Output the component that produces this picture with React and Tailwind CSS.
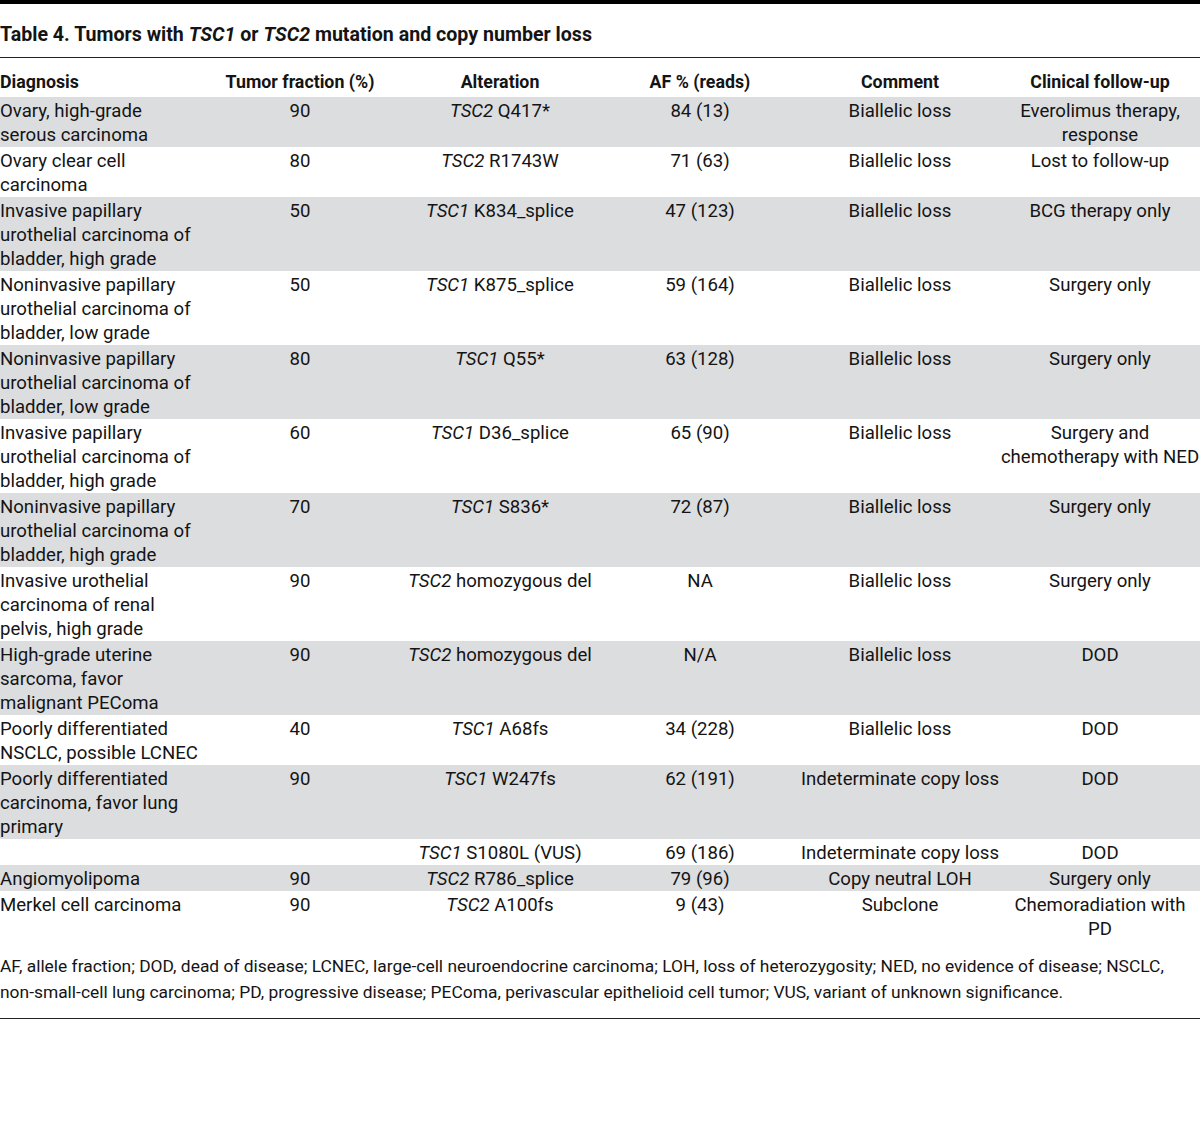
const rows = [
  { d: ["Ovary, high-grade", "serous carcinoma"], t: "90", g: "TSC2", a: " Q417*", af: "84 (13)", c: "Biallelic loss", f: ["Everolimus therapy,", "response"] },
  { d: ["Ovary clear cell", "carcinoma"], t: "80", g: "TSC2", a: " R1743W", af: "71 (63)", c: "Biallelic loss", f: ["Lost to follow-up"] },
  { d: ["Invasive papillary", "urothelial carcinoma of", "bladder, high grade"], t: "50", g: "TSC1", a: " K834_splice", af: "47 (123)", c: "Biallelic loss", f: ["BCG therapy only"] },
  { d: ["Noninvasive papillary", "urothelial carcinoma of", "bladder, low grade"], t: "50", g: "TSC1", a: " K875_splice", af: "59 (164)", c: "Biallelic loss", f: ["Surgery only"] },
  { d: ["Noninvasive papillary", "urothelial carcinoma of", "bladder, low grade"], t: "80", g: "TSC1", a: " Q55*", af: "63 (128)", c: "Biallelic loss", f: ["Surgery only"] },
  { d: ["Invasive papillary", "urothelial carcinoma of", "bladder, high grade"], t: "60", g: "TSC1", a: " D36_splice", af: "65 (90)", c: "Biallelic loss", f: ["Surgery and", "chemotherapy with NED"] },
  { d: ["Noninvasive papillary", "urothelial carcinoma of", "bladder, high grade"], t: "70", g: "TSC1", a: " S836*", af: "72 (87)", c: "Biallelic loss", f: ["Surgery only"] },
  { d: ["Invasive urothelial", "carcinoma of renal", "pelvis, high grade"], t: "90", g: "TSC2", a: " homozygous del", af: "NA", c: "Biallelic loss", f: ["Surgery only"] },
  { d: ["High-grade uterine", "sarcoma, favor", "malignant PEComa"], t: "90", g: "TSC2", a: " homozygous del", af: "N/A", c: "Biallelic loss", f: ["DOD"] },
  { d: ["Poorly differentiated", "NSCLC, possible LCNEC"], t: "40", g: "TSC1", a: " A68fs", af: "34 (228)", c: "Biallelic loss", f: ["DOD"] },
  { d: ["Poorly differentiated", "carcinoma, favor lung", "primary"], t: "90", g: "TSC1", a: " W247fs", af: "62 (191)", c: "Indeterminate copy loss", f: ["DOD"] },
  { d: [""], t: "", g: "TSC1", a: " S1080L (VUS)", af: "69 (186)", c: "Indeterminate copy loss", f: ["DOD"] },
  { d: ["Angiomyolipoma"], t: "90", g: "TSC2", a: " R786_splice", af: "79 (96)", c: "Copy neutral LOH", f: ["Surgery only"] },
  { d: ["Merkel cell carcinoma"], t: "90", g: "TSC2", a: " A100fs", af: "9 (43)", c: "Subclone", f: ["Chemoradiation with", "PD"] },
];

function Lines({ lines, className }) {
  return (
    <div className={className}>
      {lines.map((l, i) => (
        <div key={i} className="h-6 whitespace-nowrap">{l}</div>
      ))}
    </div>
  );
}

export default function App() {
  return (
    <div
      className="w-[1200px] min-h-[1129px] bg-white text-[#141414]"
      style={{ fontFamily: "Roboto, 'Liberation Sans', sans-serif" }}
    >
      <div className="h-1 bg-black" />
      <h1 className="h-[54px] pt-[19px] text-[19.6px] leading-6 font-bold border-b border-[#222]">
        Table 4. Tumors with <i>TSC1</i> or <i>TSC2</i> mutation and copy number loss
      </h1>
      <div className="grid grid-cols-6 h-[39px] pt-[12px] text-[17.8px] leading-6 font-bold">
        <div>Diagnosis</div>
        <div className="text-center">Tumor fraction (%)</div>
        <div className="text-center">Alteration</div>
        <div className="text-center">AF % (reads)</div>
        <div className="text-center">Comment</div>
        <div className="text-center">Clinical follow-up</div>
      </div>
      <div className="text-[18.6px] leading-6">
        {rows.map((r, i) => (
          <div key={i} className={"grid grid-cols-6 pt-[2px] " + (i % 2 === 0 ? "bg-[#dcdddf]" : "bg-white")}>
            <Lines lines={r.d} />
            <div className="text-center h-6">{r.t}</div>
            <div className="text-center h-6 whitespace-nowrap"><i>{r.g}</i>{r.a}</div>
            <div className="text-center h-6">{r.af}</div>
            <div className="text-center h-6 whitespace-nowrap">{r.c}</div>
            <Lines lines={r.f} className="text-center" />
          </div>
        ))}
      </div>
      <div className="pt-[12px] pb-[13px] text-[17.4px] leading-[26px] border-b border-[#222] whitespace-nowrap">
        AF, allele fraction; DOD, dead of disease; LCNEC, large-cell neuroendocrine carcinoma; LOH, loss of heterozygosity; NED, no evidence of disease; NSCLC,
        <br />
        non-small-cell lung carcinoma; PD, progressive disease; PEComa, perivascular epithelioid cell tumor; VUS, variant of unknown significance.
      </div>
    </div>
  );
}
